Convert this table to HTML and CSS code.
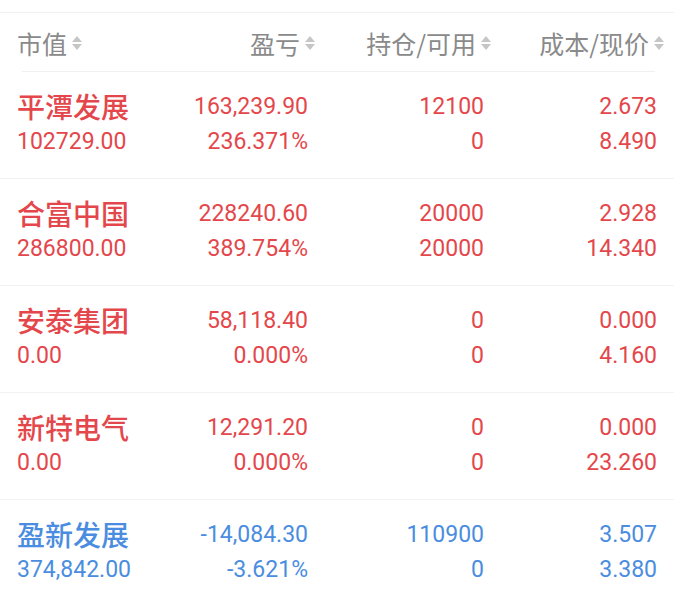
FILE: index.html
```html
<!DOCTYPE html>
<html lang="zh">
<head>
<meta charset="utf-8">
<link rel="stylesheet" href="styles.css">
</head>
<body>
<div class="top-line"></div>
<div class="head">
  <div class="hcell left">市值<span class="sort"><i class="up"></i><i class="down"></i></span></div>
  <div class="hcell">盈亏<span class="sort"><i class="up"></i><i class="down"></i></span></div>
  <div class="hcell">持仓/可用<span class="sort"><i class="up"></i><i class="down"></i></span></div>
  <div class="hcell">成本/现价<span class="sort"><i class="up"></i><i class="down"></i></span></div>
</div>
<div class="list">
  <div class="row red">
    <div class="cell left"><span class="name">平潭发展</span><span>102729.00</span></div>
    <div class="cell"><span>163,239.90</span><span>236.371%</span></div>
    <div class="cell"><span>12100</span><span>0</span></div>
    <div class="cell"><span>2.673</span><span>8.490</span></div>
  </div>
  <div class="row red">
    <div class="cell left"><span class="name">合富中国</span><span>286800.00</span></div>
    <div class="cell"><span>228240.60</span><span>389.754%</span></div>
    <div class="cell"><span>20000</span><span>20000</span></div>
    <div class="cell"><span>2.928</span><span>14.340</span></div>
  </div>
  <div class="row red">
    <div class="cell left"><span class="name">安泰集团</span><span>0.00</span></div>
    <div class="cell"><span>58,118.40</span><span>0.000%</span></div>
    <div class="cell"><span>0</span><span>0</span></div>
    <div class="cell"><span>0.000</span><span>4.160</span></div>
  </div>
  <div class="row red">
    <div class="cell left"><span class="name">新特电气</span><span>0.00</span></div>
    <div class="cell"><span>12,291.20</span><span>0.000%</span></div>
    <div class="cell"><span>0</span><span>0</span></div>
    <div class="cell"><span>0.000</span><span>23.260</span></div>
  </div>
  <div class="row blue">
    <div class="cell left"><span class="name">盈新发展</span><span>374,842.00</span></div>
    <div class="cell"><span>-14,084.30</span><span>-3.621%</span></div>
    <div class="cell"><span>110900</span><span>0</span></div>
    <div class="cell"><span>3.507</span><span>3.380</span></div>
  </div>
</div>
</body>
</html>
```
FILE: styles.css
```css
html, body {
  margin: 0;
  padding: 0;
  background: #ffffff;
}
body {
  font-family: Roboto, "Noto Sans CJK SC", sans-serif;
  width: 674px;
  height: 591px;
  overflow: hidden;
}
.top-line {
  margin-top: 12px;
  height: 1px;
  background: #f1f1f1;
}
.head {
  display: grid;
  grid-template-columns: 135px 151px 176px 173px;
  padding: 0 17px 0 0;
  height: 58px;
  align-items: center;
  border-bottom: 1px solid #f0f0f0;
  margin: 0 19px 0 22px;
  font-family: "Noto Sans CJK SC", sans-serif;
  font-size: 25px;
  color: #8a8a8a;
}
.hcell {
  display: flex;
  align-items: center;
  justify-content: flex-end;
  margin-right: -7px;
  padding-top: 1px;
}
.hcell.left {
  justify-content: flex-start;
  margin-right: 0;
  margin-left: -5px;
}
.sort {
  display: inline-flex;
  flex-direction: column;
  gap: 2px;
  margin-left: 5px;
}
.sort i {
  display: block;
  width: 0;
  height: 0;
  border-left: 5px solid transparent;
  border-right: 5px solid transparent;
}
.sort .up {
  border-bottom: 6px solid #c6c6c6;
}
.sort .down {
  border-top: 6px solid #c6c6c6;
}
.row {
  display: grid;
  grid-template-columns: 140px 151px 176px 173px;
  padding: 17px 17px 19px;
  border-bottom: 1px solid #f2f2f2;
  font-size: 23px;
  line-height: 35px;
}
.row.red { color: #e4474b; }
.row.blue { color: #4a8de0; }
.cell {
  display: flex;
  flex-direction: column;
  align-items: flex-end;
  white-space: nowrap;
}
.cell.left {
  align-items: flex-start;
}
.cell span {
  display: block;
  height: 35px;
}
.name {
  font-family: "Noto Sans CJK SC", sans-serif;
  font-size: 28px;
  font-weight: 500;
}
```
